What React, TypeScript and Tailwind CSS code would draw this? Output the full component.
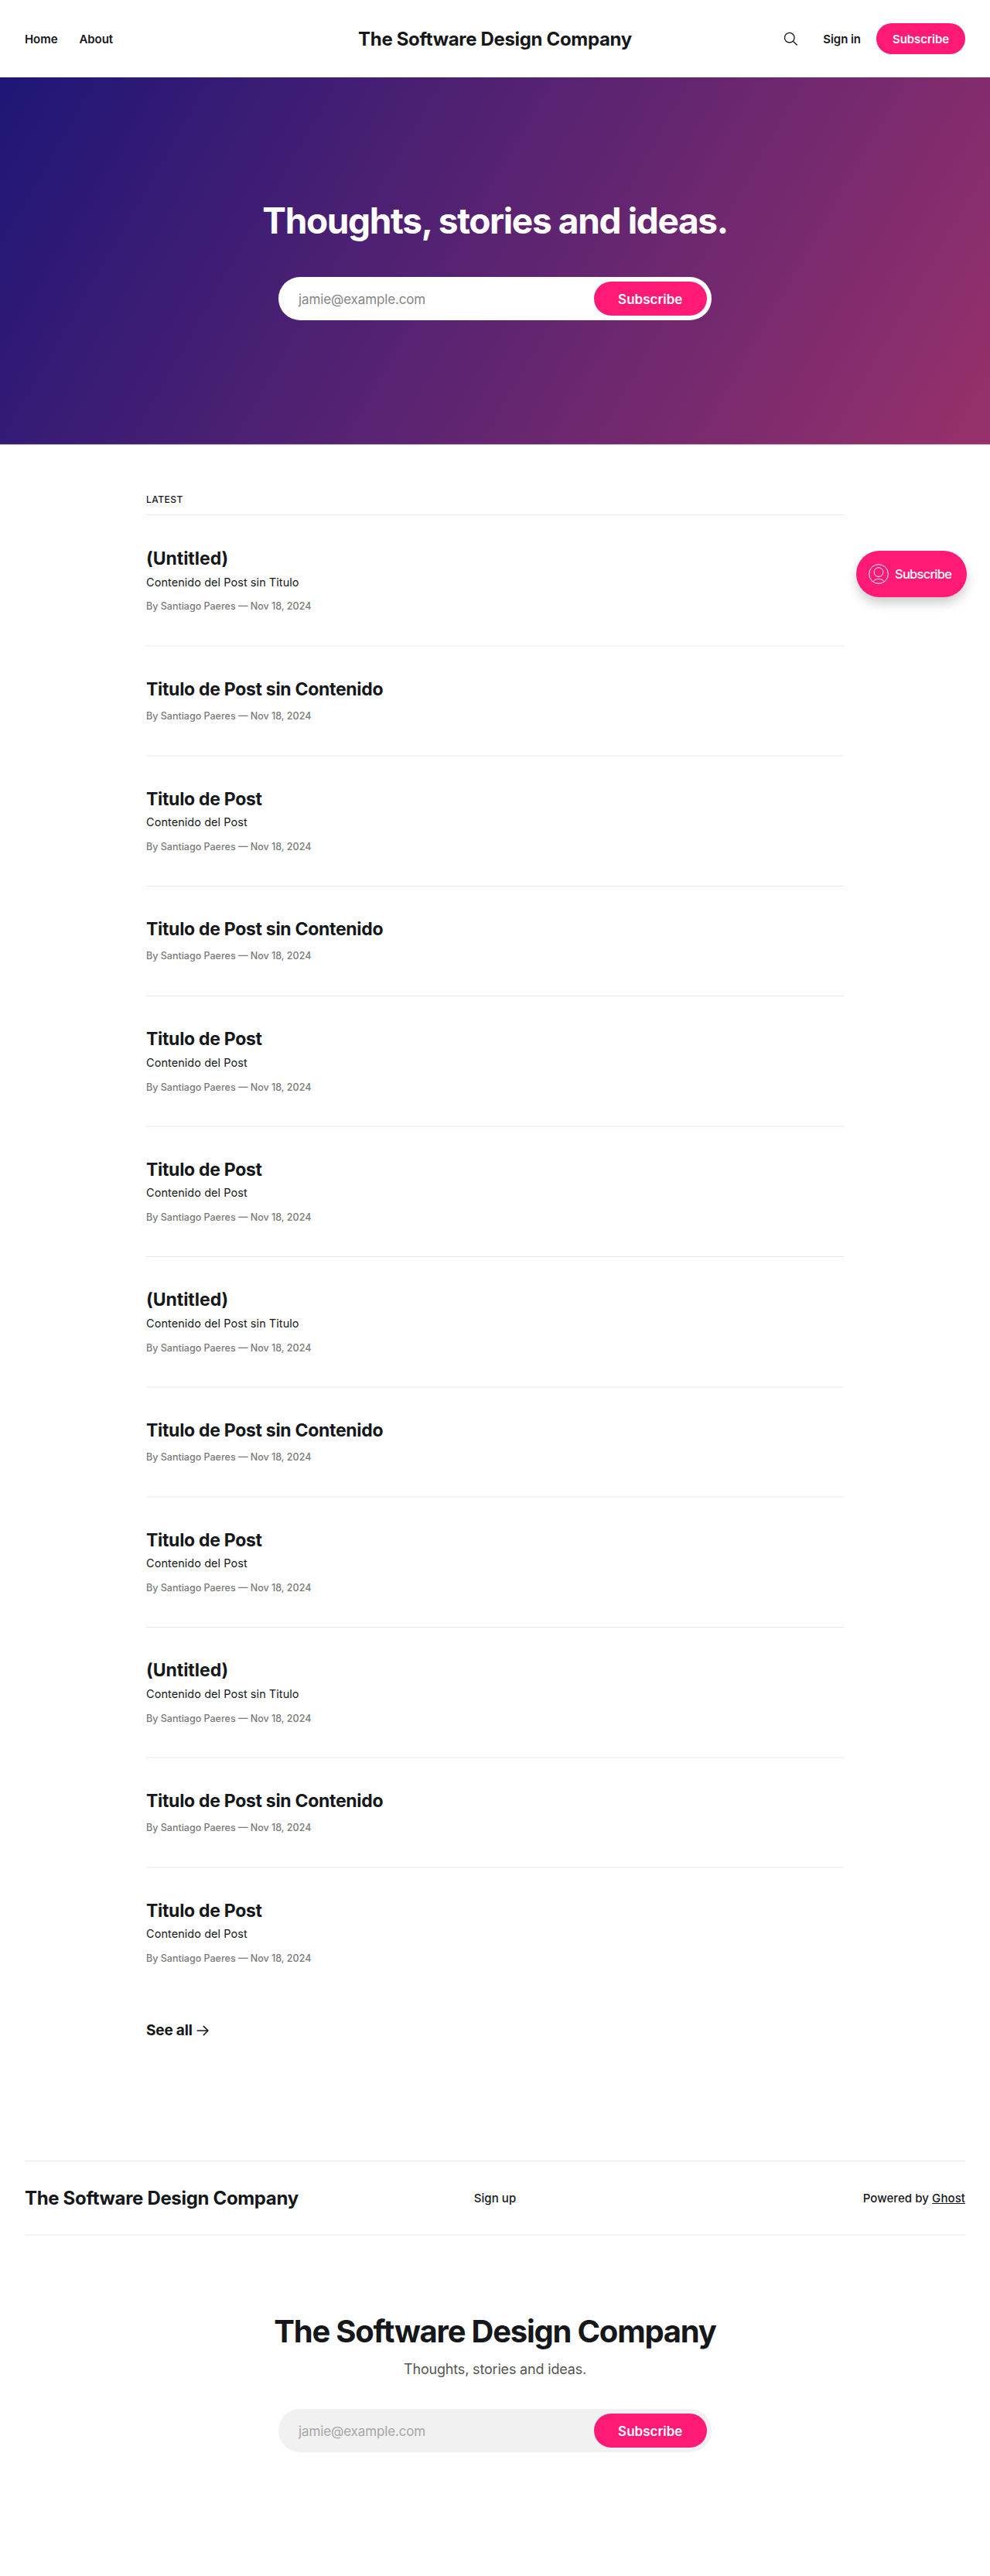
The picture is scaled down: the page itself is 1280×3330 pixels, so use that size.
import React from "react";

type Post = { title: string; excerpt?: string };

const untitled: Post = { title: "(Untitled)", excerpt: "Contenido del Post sin Titulo" };
const titleOnly: Post = { title: "Titulo de Post sin Contenido" };
const complete: Post = { title: "Titulo de Post", excerpt: "Contenido del Post" };

type Row = { post: Post; soft: boolean };

const rows: Row[] = [
  { post: untitled, soft: false },
  { post: titleOnly, soft: true },
  { post: complete, soft: true },
  { post: titleOnly, soft: false },
  { post: complete, soft: false },
  { post: complete, soft: true },
  { post: untitled, soft: false },
  { post: titleOnly, soft: true },
  { post: complete, soft: true },
  { post: untitled, soft: false },
  { post: titleOnly, soft: true },
  { post: complete, soft: true },
];

function PostCard({ post, soft }: Row) {
  return (
    <article
      className={`${post.excerpt ? "h-[168.5px]" : "h-[142px]"} ${
        soft ? "border-t-2 border-[#f4f4f4] pt-[41px]" : "border-t border-[#e8e8e8] pt-[41.5px]"
      } first:h-[169px]`}
    >
      <h3
        className={`text-[23px] leading-[28px] font-bold ${
          post.title === "(Untitled)" ? "tracking-[-0.03px]" : "tracking-[-0.3px]"
        }`}
      >
        {post.title}
      </h3>
      {post.excerpt && (
        <p className={`text-[14.5px] leading-[20px] tracking-[0.05px] ${soft ? "mt-[6px]" : "mt-[7px]"}`}>{post.excerpt}</p>
      )}
      <p className={`text-[12.5px] leading-[17px] font-medium text-[#7a7a7a] ${post.excerpt ? "mt-[12.5px]" : "mt-[12px]"}`}>
        By Santiago Paeres — Nov 18, 2024
      </p>
    </article>
  );
}

function EmailForm({ light = false }: { light?: boolean }) {
  return (
    <div
      className={`flex h-14 w-[560px] items-center rounded-full pr-[6px] pl-[26px] text-[17px] ${
        light ? "bg-white text-[#858585]" : "bg-[#f1f1f1] text-[#a6a6a6]"
      }`}
    >
      <span className="flex-1 pt-[3.5px] tracking-[-0.136px]">jamie@example.com</span>
      <button className="h-[44.5px] w-[146.5px] rounded-full bg-[#ff1a75] pt-[3px] font-semibold text-white">Subscribe</button>
    </div>
  );
}

function SearchIcon() {
  return (
    <svg width="20" height="20" viewBox="0 0 20 20" fill="none" stroke="currentColor" strokeWidth="1.35" strokeLinecap="round">
      <circle cx="8.8" cy="8.7" r="6.3" />
      <path d="M13.4 13.3L18.2 18" />
    </svg>
  );
}

function PortalTrigger() {
  return (
    <button className="absolute top-[712px] right-[30px] flex h-[59.5px] w-[143px] items-center rounded-full bg-[#ff1a75] pl-4 text-white shadow-[0_8px_16px_-2px_rgba(0,0,0,0.24)]">
      <svg width="26" height="26" viewBox="0 0 26 26" fill="none" stroke="currentColor" strokeWidth="1">
        <circle cx="13" cy="13" r="12.4" />
        <circle cx="13" cy="10.6" r="5.9" />
        <path d="M5.6 22.9C7.4 20.6 10 19.4 13 19.4s5.6 1.2 7.4 3.5" />
      </svg>
      <span className="ml-[8px] pt-px text-[16.5px] font-medium tracking-[-0.75px]">Subscribe</span>
    </button>
  );
}

export default function App() {
  return (
    <div className="relative h-[3330px] bg-white font-[Inter,sans-serif] text-[#15171a]">
      <header className="grid h-[100px] grid-cols-[1fr_auto_1fr] items-center px-8">
        <nav className="flex gap-7 pt-[2px] text-[15px] font-semibold tracking-[-0.06px]">
          <a>Home</a>
          <a>About</a>
        </nav>
        <div className="pt-[1px] text-[24px] font-bold tracking-[-0.33px]">The Software Design Company</div>
        <div className="flex items-center justify-end text-[15px] font-semibold tracking-[-0.06px]">
          <SearchIcon />
          <a className="ml-8 pt-[2px]">Sign in</a>
          <button className="ml-5 h-[39.5px] w-[115px] rounded-full bg-[#ff1a75] pt-[2px] text-white">Subscribe</button>
        </div>
      </header>

      <section className="flex h-[475px] flex-col items-center border-b border-white/50 bg-linear-[120deg,#1e1677,#98316b] bg-origin-border pt-[155px]">
        <h1 className="text-[46px] leading-[60px] font-bold tracking-[-1.36px] text-white">Thoughts, stories and ideas.</h1>
        <div className="mt-[43px]">
          <EmailForm light />
        </div>
      </section>

      <main className="mx-auto w-[902px] pt-[62px]">
        <h2 className="pb-[11px] text-[12px] leading-[17px] font-medium tracking-[0.48px]">LATEST</h2>
        <div>
          {rows.map((row, i) => (
            <PostCard key={i} {...row} />
          ))}
        </div>
        <a className="mt-[29.5px] flex h-7 items-center gap-[5px] text-[19px] font-bold tracking-[-0.18px]">
          See all
          <svg width="16" height="14" viewBox="0 0 16 14" fill="none" stroke="currentColor" strokeWidth="1.5" strokeLinecap="round" strokeLinejoin="round">
            <path d="M1.2 7H15M9.3 1.4L15 7l-5.7 5.6" />
          </svg>
        </a>
      </main>

      <footer className="mx-8 mt-[154px]">
        <div className="grid h-[97px] grid-cols-[1fr_auto_1fr] items-center border-t border-b-2 border-t-[#e8e8e8] border-b-[#f4f4f4] pt-[2px] text-[15px] font-medium tracking-[0.08px]">
          <div className="text-[24px] font-bold tracking-[-0.33px]">The Software Design Company</div>
          <a>Sign up</a>
          <div className="text-right">
            Powered by <a className="underline">Ghost</a>
          </div>
        </div>
        <div className="flex flex-col items-center pt-[100px]">
          <h2 className="text-[40px] leading-[48px] font-bold tracking-[-1.23px]">The Software Design Company</h2>
          <p className="mt-[11px] text-[18px] leading-[28px] tracking-[-0.18px] text-[#555]">Thoughts, stories and ideas.</p>
          <div className="mt-[37px]">
            <EmailForm />
          </div>
        </div>
      </footer>

      <PortalTrigger />
    </div>
  );
}
